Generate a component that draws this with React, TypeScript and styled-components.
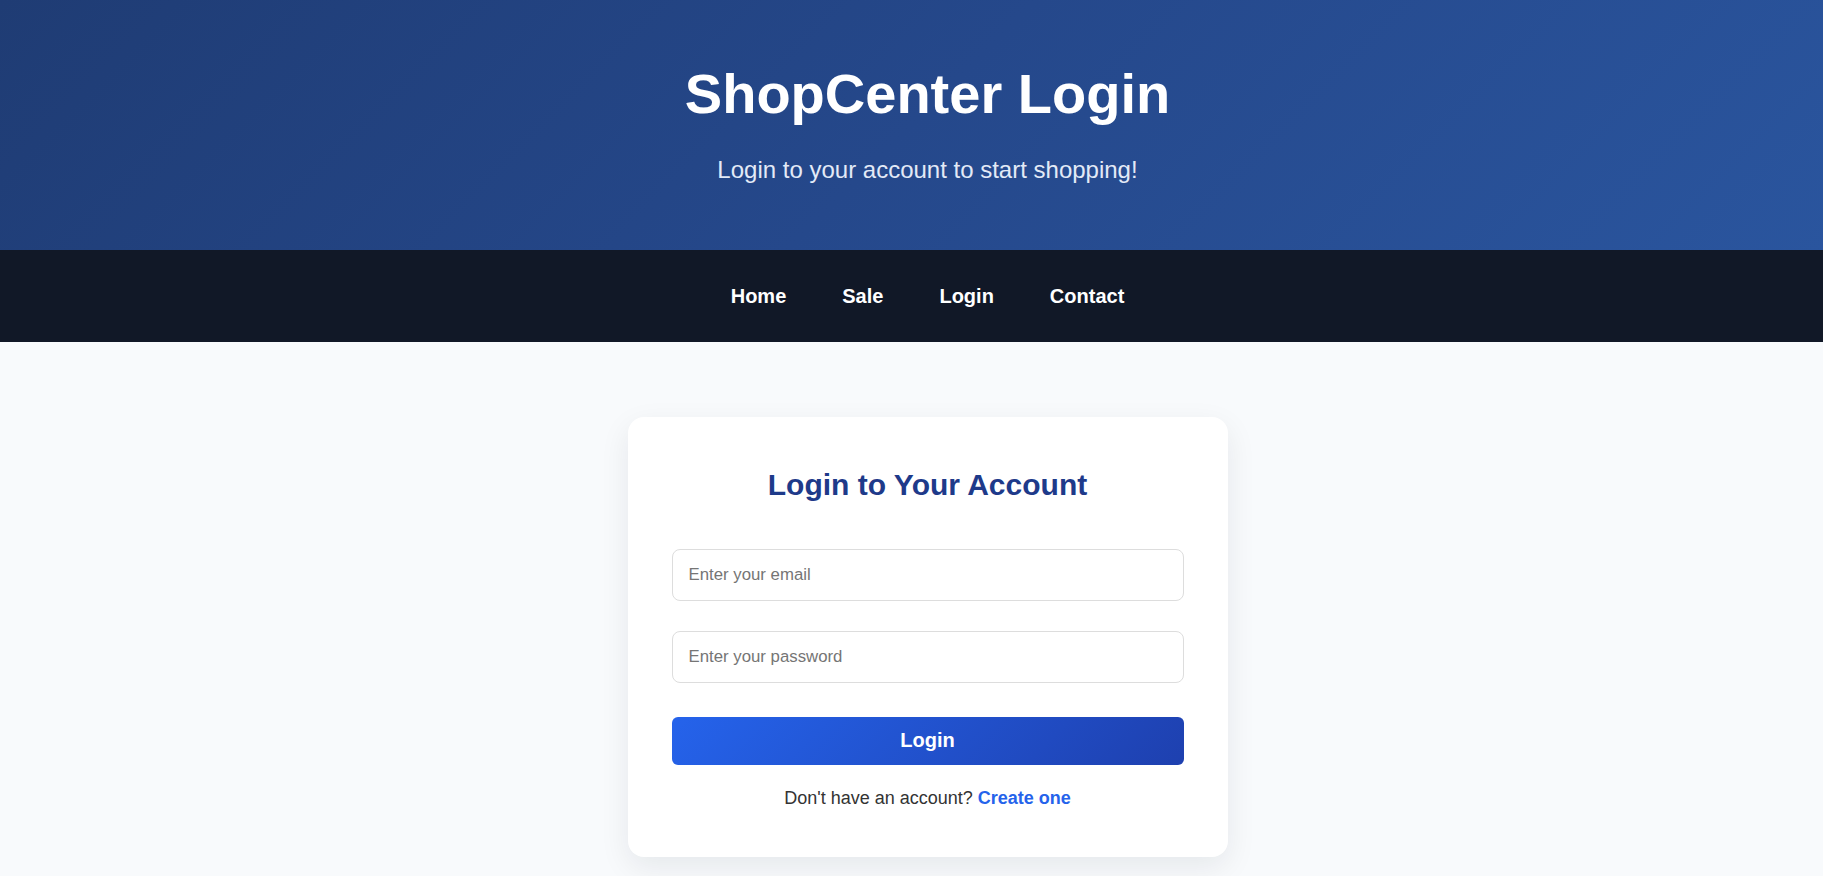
import React from "react";
import styled, { createGlobalStyle } from "styled-components";

const GlobalStyle = createGlobalStyle`
  * { box-sizing: border-box; }
  html, body { margin: 0; padding: 0; }
  body {
    background: #f8fafc;
    font-family: "Liberation Sans", Arial, sans-serif;
  }
`;

const Header = styled.header`
  background: linear-gradient(135deg, #1f3c74 0%, #25488b 50%, #2a559e 100%);
  color: #ffffff;
  text-align: center;
  padding: 61px 0 66px 32px;
`;

const Title = styled.h1`
  margin: 0;
  font-size: 56px;
  font-weight: 700;
  line-height: normal;
`;

const Subtitle = styled.p`
  margin: 30px 0 0;
  font-size: 24px;
  line-height: normal;
  color: #e3eaf7;
`;

const Nav = styled.nav`
  background: #111827;
  height: 92px;
  display: flex;
  align-items: center;
  justify-content: center;
  gap: 56px;
  padding-left: 32px;
`;

const NavLink = styled.a`
  color: #ffffff;
  font-size: 20px;
  font-weight: 700;
  text-decoration: none;
  line-height: normal;
`;

const Main = styled.main`
  display: flex;
  justify-content: center;
  padding: 75px 0 40px 32px;
`;

const Card = styled.div`
  width: 600px;
  background: #ffffff;
  border-radius: 16px;
  box-shadow: 0 10px 30px rgba(15, 23, 42, 0.08);
  padding: 51px 44px 48px;
  display: flex;
  flex-direction: column;
`;

const CardTitle = styled.h2`
  margin: 0 0 47px;
  text-align: center;
  font-size: 30px;
  font-weight: 700;
  color: #1e3a8a;
  line-height: normal;
`;

const Input = styled.input<{ $gap: number }>`
  display: block;
  width: 100%;
  margin: 0 0 ${(p) => p.$gap}px;
  padding: 15px 16px;
  font-family: "Liberation Sans", Arial, sans-serif;
  font-size: 16.8px;
  line-height: normal;
  border: 1px solid #dddddd;
  border-radius: 8px;
  background: #ffffff;
  color: #333333;
  outline: none;
  &::placeholder { color: #757575; }
`;

const Button = styled.button`
  width: 100%;
  padding: 12.5px 0;
  border: none;
  border-radius: 6px;
  background: linear-gradient(135deg, #2563eb 0%, #1e40af 100%);
  color: #ffffff;
  font-family: "Liberation Sans", Arial, sans-serif;
  font-size: 20px;
  font-weight: 700;
  line-height: normal;
  cursor: pointer;
`;

const Footer = styled.p`
  margin: 23px 0 0;
  text-align: center;
  font-size: 18px;
  line-height: normal;
  color: #333333;
`;

const FooterLink = styled.a`
  color: #2563eb;
  font-weight: 700;
  text-decoration: none;
`;

export default function App() {
  return (
    <>
      <GlobalStyle />
      <Header>
        <Title>ShopCenter Login</Title>
        <Subtitle>Login to your account to start shopping!</Subtitle>
      </Header>
      <Nav>
        <NavLink href="#">Home</NavLink>
        <NavLink href="#">Sale</NavLink>
        <NavLink href="#">Login</NavLink>
        <NavLink href="#">Contact</NavLink>
      </Nav>
      <Main>
        <Card>
          <CardTitle>Login to Your Account</CardTitle>
          <Input $gap={29.5} type="email" placeholder="Enter your email" />
          <Input $gap={34} type="password" placeholder="Enter your password" />
          <Button type="button">Login</Button>
          <Footer>
            Don't have an account? <FooterLink href="#">Create one</FooterLink>
          </Footer>
        </Card>
      </Main>
    </>
  );
}
